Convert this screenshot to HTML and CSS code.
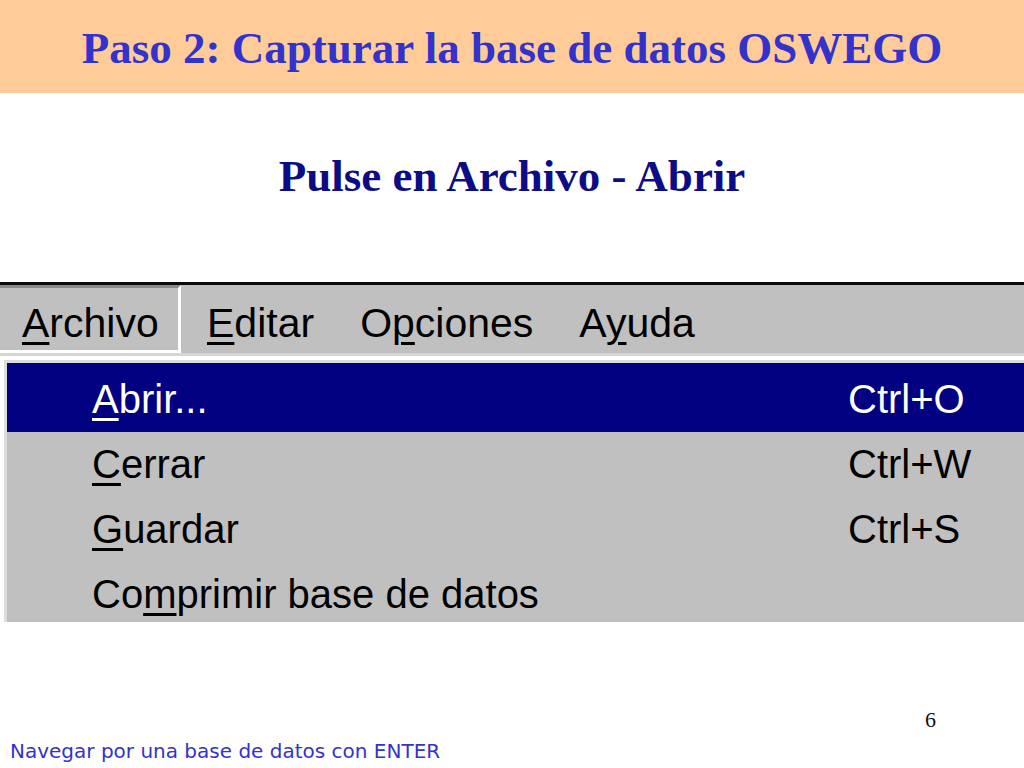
FILE: index.html
```html
<!DOCTYPE html>
<html lang="es">
<head>
<meta charset="utf-8">
<title>Paso 2: Capturar la base de datos OSWEGO</title>
<link rel="stylesheet" href="styles.css">
</head>
<body>
<header class="banner">
  <h1 class="title">Paso 2: Capturar la base de datos OSWEGO</h1>
</header>
<h2 class="subtitle">Pulse en Archivo - Abrir</h2>
<div class="window">
  <div class="menubar">
    <span class="menu-item pressed"><u>A</u>rchivo</span>
    <span class="menu-item first"><u>E</u>ditar</span>
    <span class="menu-item">O<u>p</u>ciones</span>
    <span class="menu-item">A<u>y</u>uda</span>
  </div>
  <div class="sep"></div>
  <div class="dropdown">
    <div class="row selected"><span class="label"><u>A</u>brir...</span><span class="key">Ctrl+O</span></div>
    <div class="row"><span class="label"><u>C</u>errar</span><span class="key">Ctrl+W</span></div>
    <div class="row"><span class="label"><u>G</u>uardar</span><span class="key">Ctrl+S</span></div>
    <div class="row"><span class="label">Co<u>m</u>primir base de datos</span><span class="key"></span></div>
  </div>
</div>
<footer class="footer">
  <div class="pagenum">6</div>
  <div class="navtext">Navegar por una base de datos con ENTER</div>
</footer>
</body>
</html>
```
FILE: styles.css
```css
html, body {
  margin: 0;
  padding: 0;
  background: #ffffff;
}
body {
  width: 1024px;
  height: 768px;
  overflow: hidden;
}
.banner {
  height: 93px;
  background: #ffcc99;
  display: flex;
  align-items: center;
  justify-content: center;
  box-sizing: border-box;
  padding-top: 3px;
}
.title {
  margin: 0;
  font-family: "Liberation Serif", "Times New Roman", serif;
  font-weight: bold;
  font-size: 45px;
  line-height: 1;
  color: #3333cc;
  white-space: nowrap;
}
.subtitle {
  margin: 61px 0 0;
  text-align: center;
  font-family: "Liberation Serif", "Times New Roman", serif;
  font-weight: bold;
  font-size: 45px;
  line-height: 1;
  color: #0c0c86;
}
.window {
  margin-top: 83px;
}
.menubar {
  display: flex;
  height: 68px;
  background: #c0c0c0;
  border-top: 3px solid #0a0a0a;
  font-family: "Liberation Sans", Arial, sans-serif;
  font-size: 41px;
  color: #000;
}
.menu-item {
  display: block;
  box-sizing: border-box;
  height: 68px;
  padding-top: 8px;
  line-height: 60px;
  margin-right: 46px;
  white-space: nowrap;
}
.menu-item.pressed {
  width: 181px;
  padding-left: 22px;
  margin-right: 0;
  border-top: 3px solid #8a8a8a;
  border-right: 3px solid #ffffff;
  border-bottom: 3px solid #ffffff;
  padding-top: 5px;
}
.menu-item.first {
  margin-left: 26px;
}
u {
  text-decoration: underline;
  text-decoration-thickness: 3px;
  text-underline-offset: 5px;
}
.sep {
  height: 3px;
  background: #d6d6d6;
  border-bottom: 4px solid #ffffff;
}
.dropdown {
  margin-left: 4px;
  height: 259px;
  overflow: hidden;
  background: #c0c0c0;
  border-top: 3px solid #dcdcdc;
  border-left: 3px solid #dcdcdc;
  font-family: "Liberation Sans", Arial, sans-serif;
  font-size: 40px;
  color: #000;
}
.row {
  display: grid;
  grid-template-columns: 756px 1fr;
  height: 65px;
  line-height: 65px;
  padding-left: 85px;
  white-space: nowrap;
}
.row.selected {
  background: #000080;
  color: #ffffff;
  height: 69px;
  box-sizing: border-box;
  padding-top: 4px;
}
.footer {
  margin-top: 87px;
}
.pagenum {
  padding-left: 925px;
  font-family: "Liberation Serif", "Times New Roman", serif;
  font-size: 22px;
  line-height: 1;
  color: #111;
}
.navtext {
  margin-top: 10px;
  padding-left: 10px;
  font-family: "DejaVu Sans", Verdana, sans-serif;
  font-size: 20px;
  line-height: 1;
  color: #3333cc;
}
```
